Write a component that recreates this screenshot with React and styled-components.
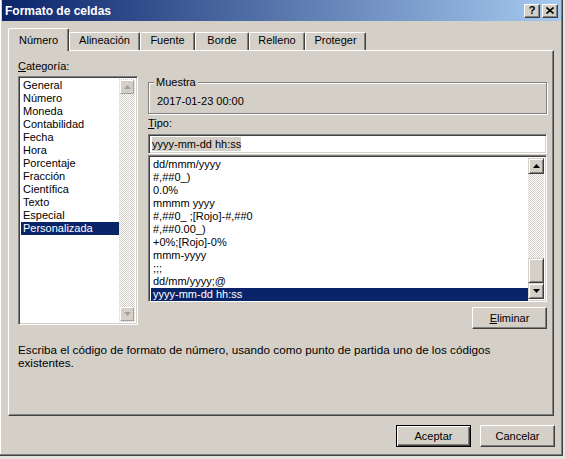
import React from "react";
import styled, { createGlobalStyle } from "styled-components";

const categories = [
  "General",
  "Número",
  "Moneda",
  "Contabilidad",
  "Fecha",
  "Hora",
  "Porcentaje",
  "Fracción",
  "Científica",
  "Texto",
  "Especial",
  "Personalizada",
];

const formats = [
  "dd/mmm/yyyy",
  "#,##0_)",
  "0.0%",
  "mmmm yyyy",
  "#,##0_ ;[Rojo]-#,##0",
  "#,##0.00_)",
  "+0%;[Rojo]-0%",
  "mmm-yyyy",
  ";;;",
  "dd/mm/yyyy;@",
  "yyyy-mm-dd hh:ss",
];

const tabs = [
  { name: "Número", width: 61 },
  { name: "Alineación", width: 71 },
  { name: "Fuente", width: 55 },
  { name: "Borde", width: 54 },
  { name: "Relleno", width: 56 },
  { name: "Proteger", width: 61 },
];

const Arrow = ({ up, color = "#000" }) => (
  <svg width="7" height="4" viewBox="0 0 7 4">
    {up ? (
      <polygon points="3.5,0 7,4 0,4" fill={color} />
    ) : (
      <polygon points="0,0 7,0 3.5,4" fill={color} />
    )}
  </svg>
);

const Scroll = ({ disabled, thumb }) => (
  <ScrollBar>
    <ScrollButton $disabled={disabled}>
      <Arrow up color={disabled ? "#a0a0a0" : "#000"} />
    </ScrollButton>
    <Track />
    {thumb && <Thumb />}
    <ScrollButton $disabled={disabled}>
      <Arrow color={disabled ? "#a0a0a0" : "#000"} />
    </ScrollButton>
  </ScrollBar>
);

export default function App() {
  return (
    <>
      <GlobalStyle />
      <Window>
        <TitleBar>
          <Title>Formato de celdas</Title>
          <TitleButtons>
            <TitleButton>?</TitleButton>
            <TitleButton>
              <svg width="8" height="7" viewBox="0 0 8 7">
                <path d="M0.5 0.5 L7.5 6.5 M7.5 0.5 L0.5 6.5" stroke="#000" strokeWidth="1.6" />
              </svg>
            </TitleButton>
          </TitleButtons>
        </TitleBar>
        <Body>
          <Tabs>
            {tabs.map((t, i) => (
              <Tab key={t.name} $width={t.width} $active={i === 0}>
                {t.name}
              </Tab>
            ))}
          </Tabs>
          <Panel>
            <Columns>
              <LeftCol>
                <Label>
                  <u>C</u>ategoría:
                </Label>
                <ListBox $height={249}>
                  <Items>
                    {categories.map((c) => (
                      <Item key={c} $selected={c === "Personalizada"}>
                        {c}
                      </Item>
                    ))}
                  </Items>
                  <Scroll disabled />
                </ListBox>
              </LeftCol>
              <RightCol>
                <GroupBox>
                  <Legend>Muestra</Legend>
                  <Sample>2017-01-23 00:00</Sample>
                </GroupBox>
                <Label $top={3}>
                  <u>T</u>ipo:
                </Label>
                <Input>
                  <Selection>yyyy-mm-dd hh:ss</Selection>
                </Input>
                <ListBox $height={147} $top={1}>
                  <Items>
                    {formats.map((f, i) => (
                      <Item key={f} $selected={i === formats.length - 1}>
                        {f}
                      </Item>
                    ))}
                  </Items>
                  <Scroll thumb />
                </ListBox>
                <ButtonRow>
                  <Button>
                    <u>E</u>liminar
                  </Button>
                </ButtonRow>
              </RightCol>
            </Columns>
            <Description>
              Escriba el código de formato de número, usando como punto de partida uno de los códigos
              <br />
              existentes.
            </Description>
          </Panel>
          <Footer>
            <Button $default>Aceptar</Button>
            <Button>Cancelar</Button>
          </Footer>
        </Body>
      </Window>
    </>
  );
}

const GlobalStyle = createGlobalStyle`
  html, body {
    margin: 0;
    padding: 0;
    background: #e6e4df;
  }
  body {
    font-family: "Liberation Sans", Arial, sans-serif;
    font-size: 11px;
    color: #000;
  }
  * {
    box-sizing: border-box;
  }
`;

const raised = `
  border: 1px solid;
  border-color: #fff #404040 #404040 #fff;
  box-shadow: inset -1px -1px 0 #808080;
`;

const sunken = `
  border: 1px solid;
  border-color: #808080 #fff #fff #808080;
  box-shadow: inset 1px 1px 0 #404040, inset -1px -1px 0 #d4d0c8;
`;

const Window = styled.div`
  width: 563px;
  height: 456px;
  background: #d4d0c8;
  border-right: 1px solid #404040;
  border-bottom: 1px solid #404040;
  box-shadow: inset -1px -1px 0 #808080, inset 1px 0 0 #fff;
  padding: 0 1px 2px 2px;
  display: flex;
  flex-direction: column;
`;

const TitleBar = styled.div`
  height: 21px;
  display: flex;
  align-items: center;
  padding: 0 3px 0 3px;
  background: linear-gradient(to right, #0a246a, #a6caf0);
`;

const Title = styled.div`
  color: #fff;
  font-weight: bold;
  font-size: 12px;
`;

const TitleButtons = styled.div`
  margin-left: auto;
  display: flex;
  gap: 2px;
`;

const TitleButton = styled.div`
  width: 16px;
  height: 14px;
  background: #d4d0c8;
  ${raised}
  display: flex;
  align-items: center;
  justify-content: center;
  font-weight: bold;
  font-size: 11px;
  line-height: 1;
`;

const Body = styled.div`
  flex: 1;
  display: flex;
  flex-direction: column;
  padding: 7px 7px 0 6px;
`;

const Tabs = styled.div`
  height: 22px;
  display: flex;
  align-items: flex-end;
  position: relative;
  z-index: 1;
`;

const Tab = styled.div`
  width: ${(p) => p.$width}px;
  height: ${(p) => (p.$active ? 23 : 18)}px;
  margin-bottom: ${(p) => (p.$active ? -1 : 0)}px;
  padding-bottom: ${(p) => (p.$active ? 4 : 3)}px;
  display: flex;
  align-items: flex-end;
  justify-content: center;
  line-height: 13px;
  background: #d4d0c8;
  border-top: 1px solid #fff;
  border-left: 1px solid #fff;
  border-right: 1px solid #404040;
  border-radius: 2px 2px 0 0;
  box-shadow: inset -1px 0 0 #808080;
`;

const Panel = styled.div`
  height: 366px;
  ${raised}
  padding: 9px 6px 0 9px;
  display: flex;
  flex-direction: column;
`;

const Columns = styled.div`
  display: flex;
  gap: 10px;
`;

const LeftCol = styled.div`
  width: 120px;
  display: flex;
  flex-direction: column;
`;

const RightCol = styled.div`
  flex: 1;
  display: flex;
  flex-direction: column;
  padding-top: 16px;
`;

const Label = styled.div`
  line-height: 13px;
  margin-top: ${(p) => p.$top || 0}px;
`;

const ListBox = styled.div`
  margin-top: ${(p) => (p.$top === undefined ? 3 : p.$top)}px;
  height: ${(p) => p.$height}px;
  background: #fff;
  ${sunken}
  padding: 2px;
  display: flex;
`;

const Items = styled.div`
  flex: 1;
  display: flex;
  flex-direction: column;
`;

const Item = styled.div`
  height: 13px;
  line-height: 13px;
  padding-left: 2px;
  white-space: nowrap;
  background: ${(p) => (p.$selected ? "#0a246a" : "transparent")};
  color: ${(p) => (p.$selected ? "#fff" : "#000")};
`;

const ScrollBar = styled.div`
  width: 16px;
  display: flex;
  flex-direction: column;
  background-color: #d4d0c8;
  background-image: repeating-conic-gradient(#fff 0% 25%, #d4d0c8 0% 50%);
  background-size: 2px 2px;
`;

const ScrollButton = styled.div`
  height: 16px;
  background: #d4d0c8;
  display: flex;
  align-items: center;
  justify-content: center;
  border: 1px solid;
  border-color: #d4d0c8 #404040 #404040 #d4d0c8;
  box-shadow: inset 1px 1px 0 #fff, inset -1px -1px 0 #808080;
  ${(p) =>
    p.$disabled &&
    `
    margin: 1px 1px;
    height: 14px;
    border-color: #fff #a0a0a0 #a0a0a0 #fff;
    box-shadow: none;
  `}
`;

const Track = styled.div`
  flex: 1;
`;

const Thumb = styled.div`
  height: 25px;
  background: #d4d0c8;
  border: 1px solid;
  border-color: #d4d0c8 #404040 #404040 #d4d0c8;
  box-shadow: inset 1px 1px 0 #fff, inset -1px -1px 0 #808080;
`;

const GroupBox = styled.div`
  position: relative;
  margin-top: 6px;
  height: 32px;
  border: 1px solid #808080;
  box-shadow: inset 1px 1px 0 #fff, 1px 1px 0 #fff;
  padding: 12px 0 0 8px;
`;

const Legend = styled.span`
  position: absolute;
  top: -7px;
  left: 5px;
  padding: 0 2px;
  line-height: 13px;
  background: #d4d0c8;
`;

const Sample = styled.div`
  line-height: 13px;
`;

const Input = styled.div`
  margin-top: 4px;
  height: 20px;
  background: #fff;
  ${sunken}
  padding: 0 3px;
  display: flex;
  align-items: center;
  font-size: 11px;
`;

const Selection = styled.span`
  background: #d4d0c8;
  line-height: 14px;
`;

const ButtonRow = styled.div`
  display: flex;
  justify-content: flex-end;
  margin-top: 5px;
`;

const Button = styled.div`
  width: 75px;
  height: 22px;
  background: #d4d0c8;
  display: flex;
  align-items: center;
  justify-content: center;
  ${(p) =>
    p.$default
      ? `
    border: 1px solid #000;
    box-shadow: inset 1px 1px 0 #fff, inset -1px -1px 0 #404040, inset -2px -2px 0 #808080;
  `
      : raised}
`;

const Description = styled.div`
  margin-top: 14px;
  line-height: 13px;
  font-size: 11.7px;
`;

const Footer = styled.div`
  display: flex;
  justify-content: flex-end;
  gap: 9px;
  margin-top: 9px;
  margin-right: -1px;
`;
